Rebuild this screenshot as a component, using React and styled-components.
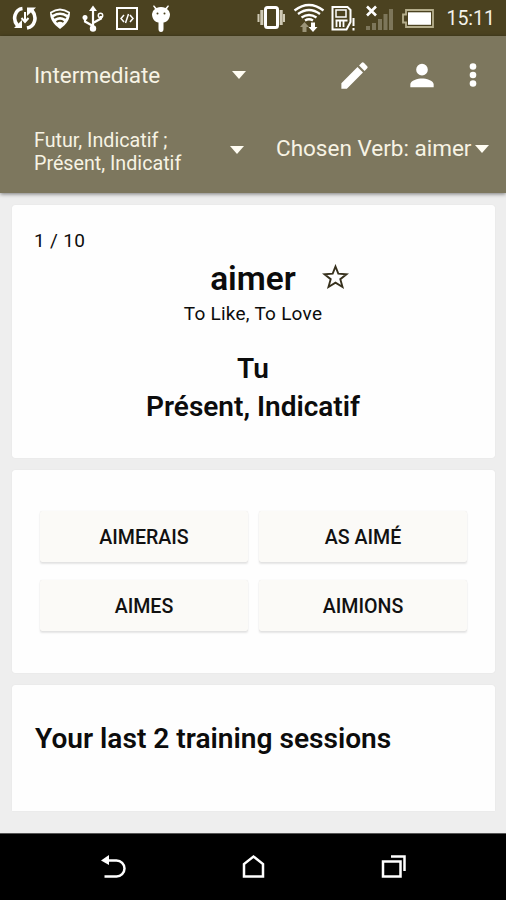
import React from "react";
import styled, { createGlobalStyle } from "styled-components";

const GlobalStyle = createGlobalStyle`
  * { box-sizing: border-box; }
  html, body { margin: 0; padding: 0; }
  body { font-family: Roboto, "Liberation Sans", sans-serif; background: #eeeeee; color: #0c0c0c; }
`;

const Screen = styled.div`
  width: 506px;
  height: 900px;
  display: flex;
  flex-direction: column;
  overflow: hidden;
  background: #eeeeee;
`;

const StatusBar = styled.div`
  height: 36px;
  flex: none;
  display: flex;
  align-items: center;
  padding: 0 11px 0 12px;
  background: #4b4220;
  color: #f3f1ea;
`;

const Glyph = styled.svg`
  display: block;
  flex: none;
  width: ${(p) => p.$w}px;
  height: ${(p) => p.$h || 36}px;
  margin-left: ${(p) => p.$gap || 0}px;
`;

const Clock = styled.span`
  margin-left: auto;
  font-size: 19.5px;
  line-height: 36px;
  padding-top: 2px;
  white-space: nowrap;
`;

const Toolbar = styled.header`
  flex: none;
  height: 157px;
  background: #7d775e;
  color: #f7f3e4;
  box-shadow: 0 1px 4px rgba(0, 0, 0, 0.5);
  z-index: 1;
`;

const ToolbarRow = styled.div`
  display: flex;
  align-items: center;
  height: ${(p) => p.$h}px;
  padding: 0 ${(p) => p.$right}px 0 34px;
`;

const Spinner = styled.div`
  display: flex;
  align-items: center;
  justify-content: space-between;
  width: ${(p) => p.$w}px;
  font-size: ${(p) => p.$size}px;
  line-height: 23px;
  letter-spacing: ${(p) => p.$spacing || 0}px;
  white-space: nowrap;
`;

const TenseList = styled.span`
  padding-top: 3px;
`;

const Actions = styled.div`
  display: flex;
  align-items: center;
  margin-left: auto;
`;

const VerbAction = styled(Actions)`
  padding-bottom: 3px;
`;

const Content = styled.main`
  flex: 1;
  display: flex;
  flex-direction: column;
  gap: 12px;
  padding: 12px 11px 0 12px;
`;

const Card = styled.section`
  height: ${(p) => p.$h}px;
  flex: none;
  background: #fefefe;
  border-radius: ${(p) => (p.$open ? "3px 3px 0 0" : "3px")};
  box-shadow: 0 0 1px rgba(0, 0, 0, 0.12);
`;

const QuestionCard = styled(Card)`
  display: flex;
  flex-direction: column;
  align-items: center;
  padding: 24px 23px 0 22px;
`;

const Counter = styled.div`
  align-self: flex-start;
  font-size: 19px;
  line-height: 24px;
  letter-spacing: 0.35px;
`;

const VerbLine = styled.div`
  display: flex;
  align-items: center;
  height: 48px;
  padding-left: 53px;
`;

const Verb = styled.h1`
  margin: 0;
  padding-top: 3px;
  font-size: 33.4px;
  font-weight: 600;
  line-height: 48px;
`;

const Translation = styled.div`
  font-size: 19px;
  line-height: 26px;
  letter-spacing: 0.25px;
`;

const Prompt = styled.div`
  margin-top: 23px;
  font-size: 28px;
  line-height: 38px;
  font-weight: 600;
  text-align: center;
`;

const AnswerCard = styled(Card)`
  display: grid;
  grid-template-columns: 208px 208px;
  grid-auto-rows: 51px;
  gap: 18px 11px;
  align-content: start;
  padding: 41px 0 0 28px;
`;

const Answer = styled.button`
  border: 0;
  padding: 1px 0 0;
  border-radius: 2px;
  background: #fbfaf7;
  box-shadow: 0 2px 2px rgba(0, 0, 0, 0.1), 0 0 1px rgba(0, 0, 0, 0.12);
  color: #111;
  font-family: inherit;
  font-size: 19.6px;
  font-weight: 500;
`;

const HistoryCard = styled(Card)`
  padding: 36px 23px 0;
`;

const HistoryTitle = styled.h2`
  margin: 0;
  font-size: 28.1px;
  line-height: 36px;
  font-weight: 600;
  white-space: nowrap;
`;

const NavBar = styled.nav`
  flex: none;
  height: 67px;
  display: flex;
  justify-content: center;
  gap: 112px;
  background: #000;
  border-top: 1px solid #555;
`;

const Caret = () => (
  <Glyph $w={14} $h={8} viewBox="0 0 14 8">
    <path d="M0 0h14L7 8z" fill="#fffdf3" />
  </Glyph>
);

const StatusIcons = () => (
  <>
    <Glyph $w={26} viewBox="0 0 26 36" fill="none" stroke="#fff" strokeWidth="3.6">
      <path d="M10.5 8.5C3 9.500 0 19 5.500 25.500M15 28c8-1.500 10.500-11 5-17.500" />
      <path d="M2 28h8v-8zM24 7.500h-9v8.500z" fill="#fff" stroke="none" />
      <path d="M13 12v9M9.500 18l3.500 4 3.500-4" strokeWidth="2" />
    </Glyph>
    <Glyph $w={22} $gap={11} viewBox="0 0 22 36">
      <path d="M1 12q10-7 20 0c0 7-3 12-10 17C4 24 1 19 1 12z" fill="#fff" />
      <g fill="none" stroke="#4b4220" strokeWidth="1.800">
        <path d="M3 14q8-5 16 0M5 18q6-4 12 0M7.500 22q3.500-2.500 7 0" />
      </g>
    </Glyph>
    <Glyph $w={22} $gap={11} viewBox="0 0 22 36" fill="none" stroke="#fff" strokeWidth="2.200">
      <path d="M11 9v19M3 18v3.500l8 4.500M19 16v2.500l-8 4.500" />
      <path d="M7 11l4-5.500 4 5.500z" fill="#fff" stroke="none" />
      <circle cx="11" cy="28.500" r="3.200" fill="#fff" stroke="none" />
      <circle cx="3" cy="17.500" r="2.500" fill="#fff" stroke="none" />
      <circle cx="18.500" cy="15.500" r="2.200" strokeWidth="1.500" />
    </Glyph>
    <Glyph $w={22} $gap={12} viewBox="0 0 22 36" fill="none" stroke="#fff">
      <rect x="1" y="8" width="20" height="21" strokeWidth="2" />
      <path d="m8 15-3 3.500L8 22M14 15l3 3.500-3 3.500M12.500 14l-3 9" strokeWidth="1.500" />
    </Glyph>
    <Glyph $w={20} $gap={13} viewBox="0 0 20 36" fill="#fff">
      <path d="M1 14q0-3 3-5L2 6l1-.7L5.500 8q4.500-2 9 0L17 5.300l1 .7-2 3q3 2 3 5c0 5-3 8-6.500 8.500V29q0 3-2.500 3t-2.500-3v-6.500C4 22 1 19 1 14z" />
      <circle cx="6.500" cy="13.500" r="1" fill="#4b4220" />
      <circle cx="13.500" cy="13.500" r="1" fill="#4b4220" />
    </Glyph>
    <Glyph $w={28} $gap={86} viewBox="0 0 28 36" fill="none" stroke="#cfc9b4">
      <rect x="8.500" y="7.500" width="12" height="20" rx="2" strokeWidth="3" stroke="#fff" />
      <path d="M4.800 10v15M24.200 10v15" strokeWidth="3" />
      <path d="M1.500 14v8M27 14v8" strokeWidth="2" />
    </Glyph>
    <Glyph $w={32} $gap={8} viewBox="0 0 32 36" fill="none" stroke="#fff" strokeWidth="2.300">
      <path d="M1.500 10.500q14.500-11 29 0M5 14q11-8 22 0M8.500 17.500q7.500-5 15 0M12 20.500q4-2.500 8 0" />
      <path d="M7 27l4.500-5 4.500 5h-2.500v5h-4v-5z" fill="#9b9478" stroke="none" />
      <path d="M15.500 27H18v-4.500h4V27h2.500L20 32z" fill="#fff" stroke="none" />
    </Glyph>
    <Glyph $w={25} $gap={6} viewBox="0 0 25 36" fill="none" stroke="#fff">
      <path d="M1.500 7h15l3 3v12l-4 7.500h-14z" strokeWidth="2" />
      <path d="M5 10h10v7H5z" strokeWidth="1.500" />
      <path d="M5.500 20v7M9 20v7M12.500 20v7M4.500 20.500h12" strokeWidth="1.800" />
      <path d="M22.500 18v8M22.500 28v2.500" strokeWidth="2" />
    </Glyph>
    <Glyph $w={29} $gap={9} viewBox="0 0 29 36" fill="#7d765a">
      <path d="M1 26h4v4H1zM7 23h4v7H7zM13 19h4v11h-4zM18.500 14h4v16h-4zM24 9h4v21h-4z" />
      <path d="m2 6.500 9 9m0-9-9 9" stroke="#fff" strokeWidth="2.600" />
    </Glyph>
    <Glyph $w={33} $gap={7} viewBox="0 0 33 36">
      <path d="M5 10h27v17H5v-4.500H2v-8h3z" fill="none" stroke="#b5ae8c" strokeWidth="1.800" />
      <path d="M7 12.300h23v12.500H7z" fill="#fff" />
    </Glyph>
  </>
);

const answers = ["AIMERAIS", "AS AIMÉ", "AIMES", "AIMIONS"];

export default function App() {
  return (
    <Screen>
      <GlobalStyle />
      <StatusBar>
        <StatusIcons />
        <Clock>15:11</Clock>
      </StatusBar>
      <Toolbar>
        <ToolbarRow $h={78} $right={29}>
          <Spinner $w={212} $size={22.500} $spacing={-0.05}>
            Intermediate
            <Caret />
          </Spinner>
          <Actions>
            <Glyph $w={35} $h={35} viewBox="0 0 24 24" fill="#fff">
              <path d="M3 17.250V21h3.750L17.810 9.940l-3.750-3.750zM20.710 7.040a1 1 0 0 0 0-1.410l-2.340-2.340a1 1 0 0 0-1.410 0l-1.830 1.830 3.750 3.750z" />
            </Glyph>
            <Glyph $w={36} $h={35} $gap={32} viewBox="0 0 24 24" fill="#fff">
              <path d="M12 12a4 4 0 1 0 0-8 4 4 0 0 0 0 8zm0 2c-2.670 0-8 1.340-8 4v2h16v-2c0-2.660-5.330-4-8-4z" />
            </Glyph>
            <Glyph $w={8} $h={26} $gap={29} viewBox="0 0 8 26" fill="#fff">
              <circle cx="4" cy="4.500" r="3.300" />
              <circle cx="4" cy="13" r="3.300" />
              <circle cx="4" cy="21.500" r="3.300" />
            </Glyph>
          </Actions>
        </ToolbarRow>
        <ToolbarRow $h={72} $right={17}>
          <Spinner $w={210} $size={19.700}>
            <TenseList>
              Futur, Indicatif ;<br />
              Présent, Indicatif
            </TenseList>
            <Caret />
          </Spinner>
          <VerbAction>
            <Spinner $w={213} $size={22.500}>
              Chosen Verb: aimer
              <Caret />
            </Spinner>
          </VerbAction>
        </ToolbarRow>
      </Toolbar>
      <Content>
        <QuestionCard $h={253}>
          <Counter>1 / 10</Counter>
          <VerbLine>
            <Verb>aimer</Verb>
            <Glyph $w={27} $h={26} $gap={26} viewBox="0 0 27 26" fill="none" stroke="#37311d" strokeWidth="1.900">
              <path d="M13.500 2.500 16.300 9.700 24.500 10.200 18.300 15.200 20.500 23 13.500 18.600 6.500 23 8.700 15.200 2.500 10.200 10.700 9.700z" />
            </Glyph>
          </VerbLine>
          <Translation>To Like, To Love</Translation>
          <Prompt>
            Tu
            <br />
            Présent, Indicatif
          </Prompt>
        </QuestionCard>
        <AnswerCard $h={203}>
          {answers.map((a) => (
            <Answer key={a}>{a}</Answer>
          ))}
        </AnswerCard>
        <HistoryCard $h={126} $open>
          <HistoryTitle>Your last 2 training sessions</HistoryTitle>
        </HistoryCard>
      </Content>
      <NavBar>
        <Glyph $w={28} $h={66} viewBox="0 0 28 66" fill="none" stroke="#fff" strokeWidth="2.500">
          <path d="M7 26.500h10.500a8 8 0 0 1 0 16H5.500" />
          <path d="M2 26.500 10 21v10z" fill="#fff" stroke="none" />
        </Glyph>
        <Glyph $w={28} $h={66} viewBox="0 0 28 66" fill="none" stroke="#fff" strokeWidth="2.500">
          <path d="M5 42.500V30l9.500-7.500L24 30v12.500z" />
        </Glyph>
        <Glyph $w={28} $h={66} viewBox="0 0 28 66" fill="none" stroke="#fff" strokeWidth="2.500">
          <path d="M4 27.500h17.500v15H4zM12 22.500h13.500V37" />
        </Glyph>
      </NavBar>
    </Screen>
  );
}
